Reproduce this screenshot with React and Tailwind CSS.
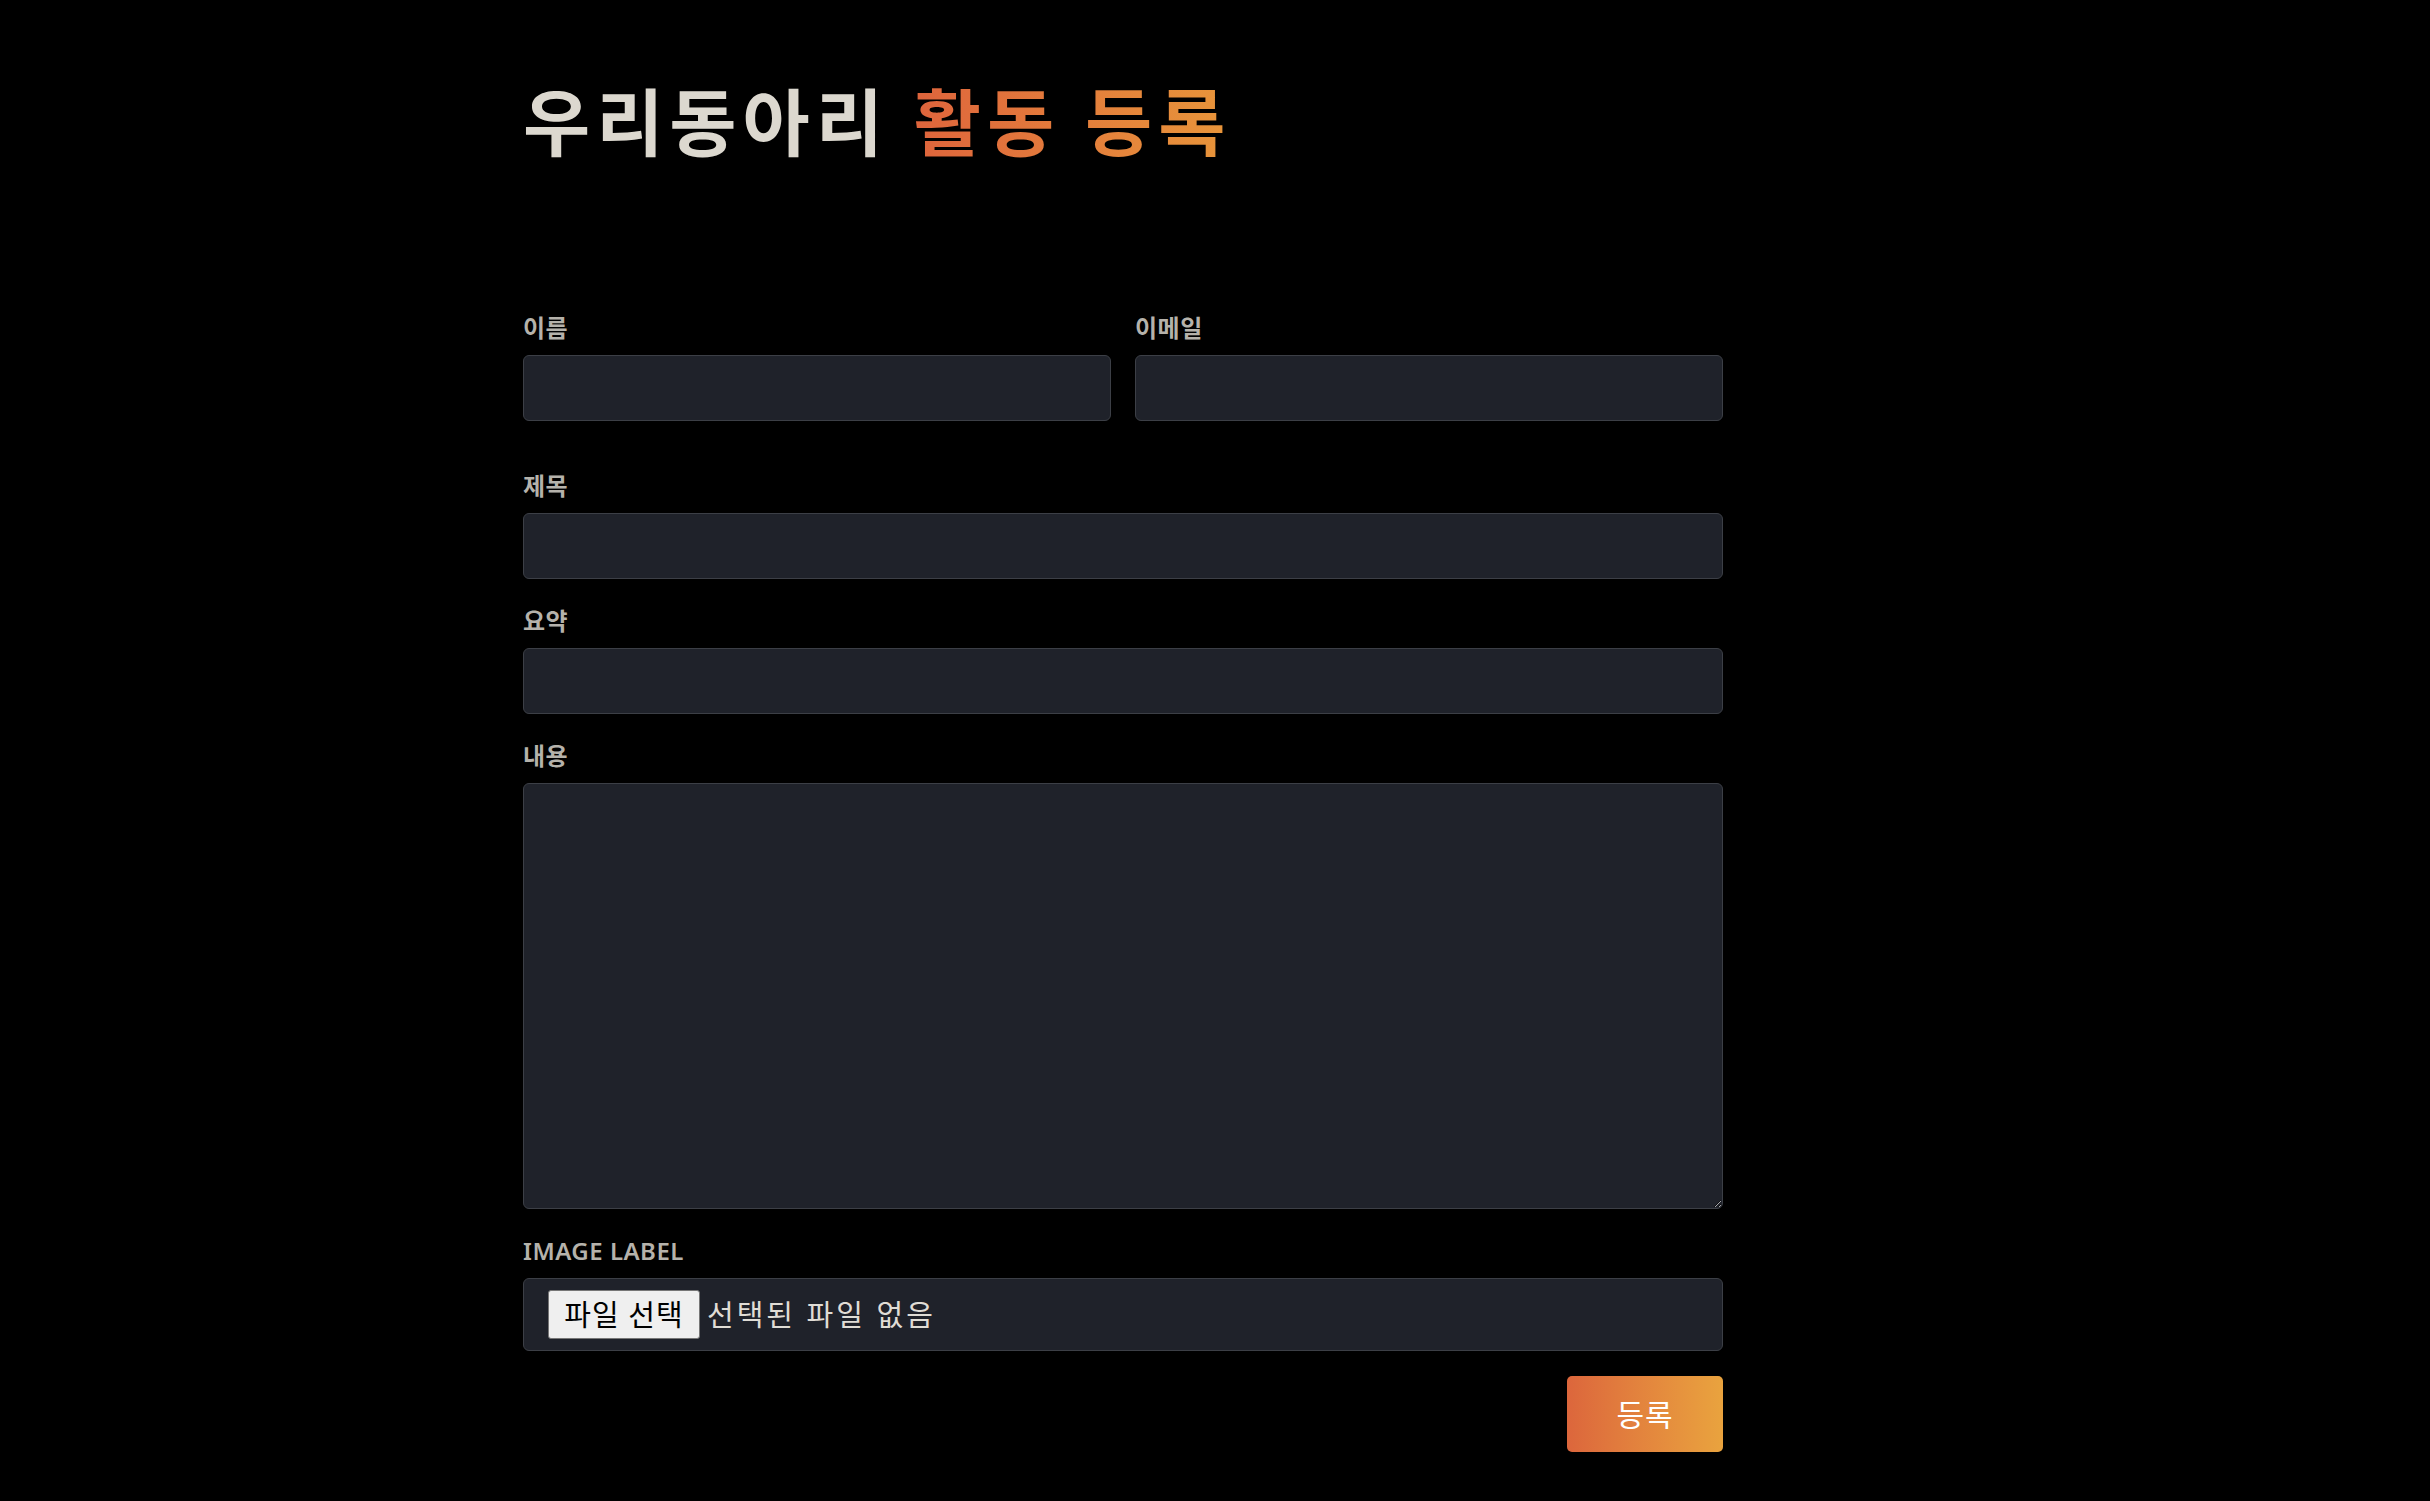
import React, { useState } from 'react'

const font = { fontFamily: '"Noto Sans", "Noto Sans CJK KR", sans-serif' }

const Label = ({ children, htmlFor }) => (
  <label
    htmlFor={htmlFor}
    className="block text-[24px] leading-[36px] font-semibold text-[#b5b2ab] mb-[9px] tracking-[0.5px]"
  >
    {children}
  </label>
)

const inputClass =
  'block w-full h-[66px] bg-[#1f222a] border border-[#3c3f46] rounded-[6px] px-4 text-[24px] text-[#dcd8cf] outline-none focus:border-[#e2773b]'

const App = () => {
  const [fileName, setFileName] = useState('')

  return (
    <div className="min-h-[1501px] bg-black" style={font}>
      <div className="w-[1200px] ml-[523px] pt-[68px]">
        <h1 className="text-[73px] leading-[108px] font-bold text-[#dcd8cf] tracking-[6px]">
          우리동아리{'  '}
          <span className="bg-gradient-to-r from-[#de643c] to-[#e8953a] bg-clip-text text-transparent">
            활동 등록
          </span>
        </h1>

        <form className="mt-[134px]" onSubmit={(e) => e.preventDefault()}>
          <div className="grid grid-cols-2 gap-x-[24px] mb-[47px]">
            <div>
              <Label htmlFor="name">이름</Label>
              <input id="name" type="text" className={inputClass} />
            </div>
            <div>
              <Label htmlFor="email">이메일</Label>
              <input id="email" type="email" className={inputClass} />
            </div>
          </div>

          <div className="mb-[24px]">
            <Label htmlFor="title">제목</Label>
            <input id="title" type="text" className={inputClass} />
          </div>

          <div className="mb-[24px]">
            <Label htmlFor="summary">요약</Label>
            <input id="summary" type="text" className={inputClass} />
          </div>

          <div className="mb-[24px]">
            <Label htmlFor="content">내용</Label>
            <textarea
              id="content"
              className="block w-full h-[426px] bg-[#1f222a] border border-[#3c3f46] rounded-[6px] px-4 py-3 text-[24px] text-[#dcd8cf] outline-none resize-y [color-scheme:dark]"
            />
          </div>

          <div className="mb-[25px]">
            <Label htmlFor="image">IMAGE LABEL</Label>
            <label
              htmlFor="image"
              className="flex items-center w-full h-[73px] bg-[#1f222a] border border-[#3c3f46] rounded-[6px] pl-[24px] cursor-pointer"
            >
              <span className="flex items-center justify-center h-[49px] w-[152px] bg-[#efefef] border border-[#767676] rounded-[3px] text-[29px] text-black tracking-[1px]">
                파일 선택
              </span>
              <span className="ml-[7px] text-[29px] text-[#e0ddd6] tracking-[3px]">
                {fileName || '선택된 파일 없음'}
              </span>
              <input
                id="image"
                type="file"
                className="hidden"
                onChange={(e) => setFileName(e.target.files[0] ? e.target.files[0].name : '')}
              />
            </label>
          </div>

          <div className="flex justify-end">
            <button
              type="submit"
              className="w-[156px] h-[76px] rounded-[5px] bg-gradient-to-r from-[#dc663c] to-[#e9a33e] text-white text-[30px] tracking-[1px]"
            >
              등록
            </button>
          </div>
        </form>
      </div>
    </div>
  )
}

export default App
